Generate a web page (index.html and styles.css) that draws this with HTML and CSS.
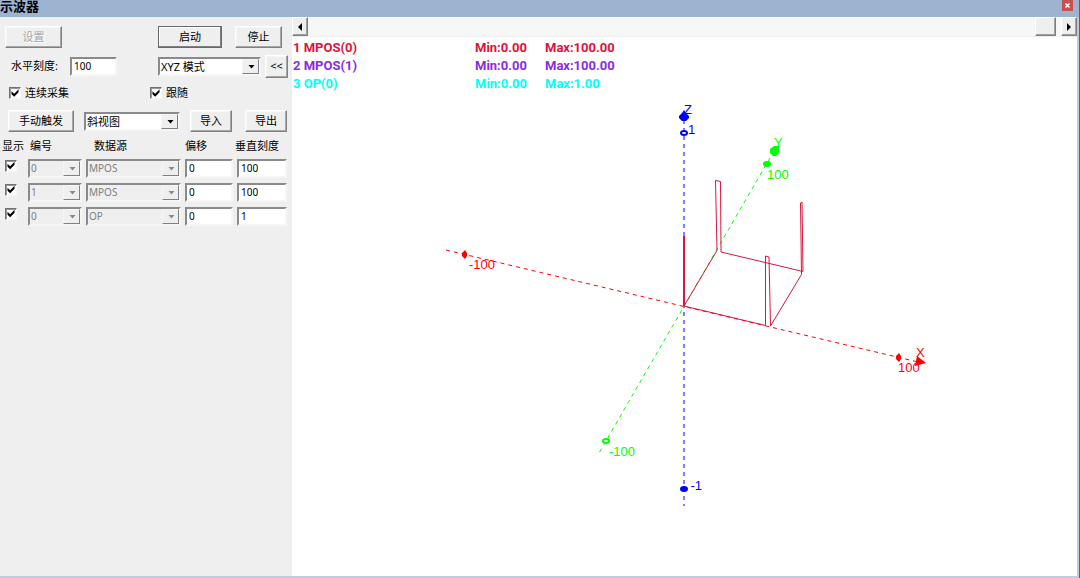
FILE: index.html
```html
<!DOCTYPE html>
<html lang="zh-CN">
<head>
<meta charset="utf-8">
<title>示波器</title>
<link rel="stylesheet" href="styles.css">
</head>
<body>
<div class="window">
  <header class="titlebar">
    <h1 class="title">示波器</h1>
    <button class="close" aria-label="关闭"><svg viewBox="0 0 11 11" width="11" height="11"><path d="M3.500 3.500l4 4M7.500 3.500l-4 4"/></svg></button>
  </header>
  <main class="body">
    <form class="panel">
      <div class="row row-run">
        <button type="button" class="btn btn-setup" disabled>设置</button>
        <button type="button" class="btn btn-default">启动</button>
        <button type="button" class="btn">停止</button>
      </div>
      <div class="row row-scale">
        <label class="label" for="hscale">水平刻度:</label>
        <input class="field" id="hscale" value="100">
        <span class="combo"><select aria-label="模式"><option>XYZ 模式</option></select></span>
        <button type="button" class="btn btn-fold">&lt;&lt;</button>
      </div>
      <div class="row row-checks">
        <label class="check"><input type="checkbox" class="box" checked>连续采集</label>
        <label class="check"><input type="checkbox" class="box" checked>跟随</label>
      </div>
      <div class="row row-view">
        <button type="button" class="btn">手动触发</button>
        <span class="combo"><select aria-label="视图"><option>斜视图</option></select></span>
        <div class="pair">
          <button type="button" class="btn">导入</button>
          <button type="button" class="btn">导出</button>
        </div>
      </div>
      <table class="channels">
        <colgroup><col class="c-show"><col class="c-num"><col class="c-src"><col class="c-off"><col class="c-scale"></colgroup>
        <thead>
          <tr><th>显示</th><th>编号</th><th class="th-src">数据源</th><th class="th-off">偏移</th><th>垂直刻度</th></tr>
        </thead>
        <tbody>
          <tr>
            <td><input type="checkbox" class="box" aria-label="显示 1" checked></td>
            <td><span class="combo"><select aria-label="编号 1" disabled><option>0</option></select></span></td>
            <td><span class="combo"><select aria-label="数据源 1" disabled><option>MPOS</option></select></span></td>
            <td><input class="field" aria-label="偏移 1" value="0"></td>
            <td><input class="field" aria-label="垂直刻度 1" value="100"></td>
          </tr>
          <tr>
            <td><input type="checkbox" class="box" aria-label="显示 2" checked></td>
            <td><span class="combo"><select aria-label="编号 2" disabled><option>1</option></select></span></td>
            <td><span class="combo"><select aria-label="数据源 2" disabled><option>MPOS</option></select></span></td>
            <td><input class="field" aria-label="偏移 2" value="0"></td>
            <td><input class="field" aria-label="垂直刻度 2" value="100"></td>
          </tr>
          <tr>
            <td><input type="checkbox" class="box" aria-label="显示 3" checked></td>
            <td><span class="combo"><select aria-label="编号 3" disabled><option>0</option></select></span></td>
            <td><span class="combo"><select aria-label="数据源 3" disabled><option>OP</option></select></span></td>
            <td><input class="field" aria-label="偏移 3" value="0"></td>
            <td><input class="field" aria-label="垂直刻度 3" value="1"></td>
          </tr>
        </tbody>
      </table>
    </form>
    <section class="scope">
      <div class="scrollbar">
        <button class="scroll-btn" aria-label="向左"><svg viewBox="0 0 8 8" width="8" height="8"><path d="M6 0v8L2 4z"/></svg></button>
        <div class="track"><div class="thumb"></div></div>
        <button class="scroll-btn" aria-label="向右"><svg viewBox="0 0 8 8" width="8" height="8"><path d="M2 0v8l4-4z"/></svg></button>
      </div>
      <div class="legend">
        <div class="trace trace-1"><span>1 MPOS(0)</span><span>Min:0.00</span><span>Max:100.00</span></div>
        <div class="trace trace-2"><span>2 MPOS(1)</span><span>Min:0.00</span><span>Max:100.00</span></div>
        <div class="trace trace-3"><span>3 OP(0)</span><span>Min:0.00</span><span>Max:1.00</span></div>
      </div>
      <svg class="plot" viewBox="292 94 785 482" preserveAspectRatio="xMinYMin meet">
        <g class="axis-z">
          <path class="dash" d="M684 120V506"/>
          <path class="solid" d="M684 110l2 3 3 3v2l-3 3h-4l-3-3v-2l3-3z"/>
          <ellipse class="ring" cx="684" cy="133" rx="3" ry="2"/>
          <ellipse class="solid" cx="684" cy="489" rx="4" ry="3"/>
          <text x="684" y="114">Z</text>
          <text x="688" y="134">1</text>
          <text x="702" y="490" text-anchor="end">-1</text>
        </g>
        <g class="axis-y">
          <path class="dash" d="M774 151L599 453"/>
          <path class="solid" d="M770 149l4-3h5v6l-3 4h-3l-3-3z"/>
          <ellipse class="solid" cx="767" cy="164" rx="4" ry="3"/>
          <ellipse class="ring" cx="606" cy="441" rx="3" ry="2"/>
          <text x="774" y="147">Y</text>
          <text x="767" y="179">100</text>
          <text x="635" y="456" text-anchor="end">-100</text>
        </g>
        <g class="axis-x">
          <path class="dash" d="M446 250L918 362"/>
          <path class="solid" d="M917 356l9 7-11 3z"/>
          <path class="solid" d="M899 353l2 3v3l-2 3-3-3v-3zM465 250l2 3v3l-2 3-3-3v-3z"/>
          <text x="916" y="357">X</text>
          <text x="898" y="372">100</text>
          <text x="495" y="269" text-anchor="end">-100</text>
        </g>
        <path class="curve-thick" d="M684 236V306"/>
        <path class="curve" d="M684 306L765.500 325.500V256L769 257L770.500 326L801.500 274.500L800.500 203L802 202L803 271.500L721 252L720.500 181.500L715.500 180.500L717 250.500L684 306"/>
      </svg>
    </section>
  </main>
</div>
</body>
</html>
```
FILE: styles.css
```css
* { box-sizing: border-box; }
body {
  margin: 0;
  font: 11px/14px "Noto Sans", "Noto Sans CJK SC", sans-serif;
  color: #000;
}
button, input, select { font: inherit; color: inherit; margin: 0; }

.window {
  display: flex;
  flex-direction: column;
  height: 100vh;
  overflow: hidden;
  border-right: 1px solid #606468;
  background: #fff;
}
.titlebar {
  display: flex;
  flex: none;
  justify-content: space-between;
  align-items: flex-start;
  height: 17px;
  padding-right: 6px;
  background: #9cb4d0;
}
.title { margin: 0; font-size: 13px; line-height: 12px; font-weight: 700; }
.close { width: 11px; height: 11px; padding: 0; border: 0; background: #c75050; }
.close svg { display: block; stroke: #fff; stroke-width: 1.5; }
.body {
  display: flex;
  flex: 1;
  min-height: 0;
  border-right: 2px solid #b4cbe6;
  border-bottom: 2px solid #b9cfe8;
}

.panel { flex: none; width: 292px; padding: 7px 4px 0 0; background: #efefef; }
.row { display: grid; align-items: center; }
.row-run { grid-template-columns: 1fr 64px 47px; column-gap: 13px; height: 25px; padding: 0 6px 0 5px; }
.btn-setup { width: 57px; }
.row-scale { grid-template-columns: 59px 47px 1fr 23px; height: 34px; padding-left: 11px; }
.row-scale .combo { margin: 0 4px 0 41px; }
.row-checks { grid-template-columns: 141px 1fr; height: 20px; padding-left: 9px; }
.row-view { grid-template-columns: 66px 96px 1fr; column-gap: 10px; height: 36px; padding: 0 1px 0 8px; }
.pair { display: grid; grid-template-columns: 42px 42px; justify-content: space-between; }

.btn {
  height: 22px;
  padding: 0;
  border: 1px solid;
  border-color: #fff #808080 #808080 #fff;
  box-shadow: inset -1px -1px #a8a8a8, inset 1px 1px #f6f6f6;
  background: #efefef;
  line-height: 18px;
  text-align: center;
}
.btn:disabled { color: #a6a6a6; text-shadow: 1px 1px #fff; }
.btn-default { border-color: #686868; box-shadow: inset -1px -1px #808080, inset 1px 1px #fff; }
.btn-fold { height: 23px; }

.field {
  display: block;
  width: 100%;
  height: 19px;
  padding: 0 2px;
  border: 2px solid;
  border-color: #8a8a8a #f6f6f6 #f6f6f6 #8a8a8a;
  border-radius: 0;
  background: #fff;
  font-size: 10px;
}
.combo { position: relative; display: block; }
.combo select {
  display: block;
  width: 100%;
  height: 19px;
  padding: 0 0 0 1px;
  border: 2px solid;
  border-color: #8a8a8a #f6f6f6 #f6f6f6 #8a8a8a;
  border-radius: 0;
  background: #fff;
  font-size: 11px;
  line-height: 15px;
  appearance: none;
}
.combo select:disabled { background: #efefef; color: #808080; opacity: 1; font-size: 10px; }
.combo::before, .combo::after { content: ""; position: absolute; pointer-events: none; }
.combo::before {
  top: 2px;
  right: 2px;
  bottom: 2px;
  width: 15px;
  border: 1px solid;
  border-color: #f6f6f6 #808080 #808080 #f6f6f6;
  background: #efefef;
}
.combo::after {
  top: 8px;
  right: 6px;
  width: 7px;
  height: 4px;
  background: #000;
  clip-path: polygon(0 0, 100% 0, 50% 100%);
}
.combo:has(select:disabled)::after { background: #8a8a8a; }

.check { display: flex; align-items: center; gap: 4px; }
.box {
  display: block;
  flex: none;
  width: 12px;
  height: 12px;
  border: 1px solid;
  border-color: #707070 #f6f6f6 #f6f6f6 #707070;
  background: #fff;
  box-shadow: inset 1px 1px #9a9a9a;
  appearance: none;
}
.box:checked::before {
  content: "";
  display: block;
  width: 8px;
  height: 8px;
  margin: 1px;
  background: #000;
  clip-path: polygon(6% 28%, 40% 58%, 94% 4%, 94% 42%, 40% 96%, 6% 66%);
}

.channels { width: 287px; table-layout: fixed; border-collapse: collapse; }
.channels th { height: 17px; padding: 0 0 3px 2px; font-weight: 400; text-align: left; white-space: nowrap; line-height: 14px; }
.channels .th-src { padding-left: 12px; }
.channels .th-off { padding-left: 4px; }
.channels td { height: 24px; padding: 0 0 0 4px; vertical-align: middle; }
.channels td:first-child { padding: 0 0 5px 5px; }
.channels td:nth-child(2) { padding-left: 0; }
.c-show { width: 28px; }
.c-num { width: 54px; }
.c-src { width: 99px; }
.c-off { width: 52px; }

.scope { display: flex; flex: 1; flex-direction: column; min-width: 0; background: #fff; }
.scrollbar { display: flex; flex: none; height: 20px; border-bottom: 1px solid #f0f0f0; background: #f7f7f7; }
.scroll-btn, .thumb {
  flex: none;
  height: 19px;
  padding: 0;
  border: 1px solid;
  border-color: #fff #808080 #808080 #fff;
  box-shadow: inset -1px -1px #a0a0a0;
  background: #efefef;
}
.scroll-btn { display: grid; place-items: center; width: 16px; }
.track { display: flex; flex: 1; justify-content: flex-end; padding-right: 5px; }
.thumb { width: 21px; }

.legend { flex: none; padding: 2px 0 1px 1px; font: 700 13px/18px Roboto, "Liberation Sans", sans-serif; }
.trace { display: grid; grid-template-columns: 182px 70px 1fr; }
.trace-1 { color: #dc143c; }
.trace-2 { color: #8a2be2; }
.trace-3 { color: #00ffff; }

.plot { display: block; flex: 1; width: 100%; min-height: 0; font: 13px "Liberation Sans", sans-serif; }
.dash { fill: none; stroke: currentColor; stroke-width: 1; stroke-dasharray: 4 4; }
.solid, .plot text { fill: currentColor; }
.ring { fill: #fff; stroke: currentColor; stroke-width: 2; }
.axis-x { color: #ff0000; }
.axis-y { color: #00ff00; }
.axis-z { color: #0000ff; }
.curve, .curve-thick { fill: none; stroke: #dc143c; stroke-width: 1; }
.curve-thick { stroke-width: 2; }
```
